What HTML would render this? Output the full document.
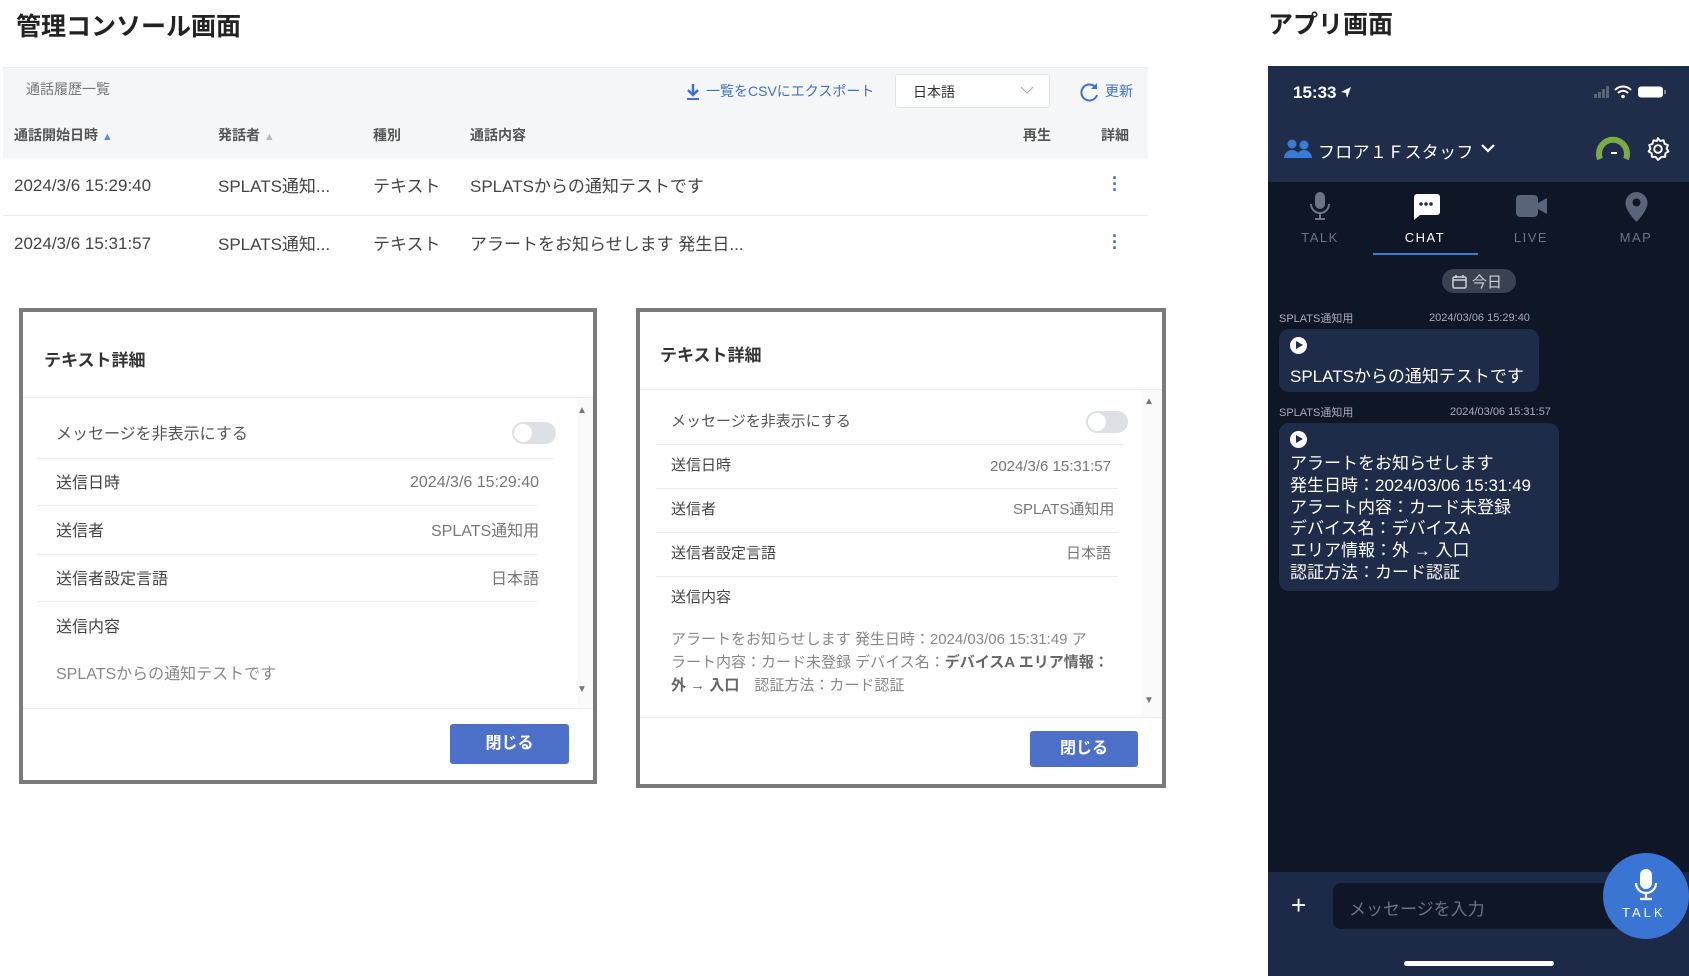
<!DOCTYPE html>
<html><head><meta charset="utf-8">
<style>
*{margin:0;padding:0;box-sizing:border-box}
body{width:1689px;height:976px;background:#fff;position:relative;overflow:hidden;font-family:"Liberation Sans","Noto Sans CJK JP",sans-serif;color:#333}
.a{position:absolute;white-space:nowrap}
.h1{font-size:25px;font-weight:bold;color:#222}
.hd{font-size:14px;color:#555;font-weight:bold}
.cell{font-size:17px;color:#444}
.dlg{position:absolute;border:4px solid #7a7a7c;background:#fff}
.line{position:absolute;height:1px;background:#ececec}
.lbl{font-size:16px;color:#444}
.val{font-size:16px;color:#777}
.tog{position:absolute;width:44px;height:22px;border-radius:11px;background:#dde0e5}
.tog:after{content:"";position:absolute;left:2px;top:2px;width:18px;height:18px;border-radius:50%;background:#fff}
.btn{position:absolute;background:#4d70c8;color:#fff;font-size:16px;font-weight:bold;text-align:center;border-radius:3px}
.ph{color:#fff}
.tab{font-size:13px;letter-spacing:1.5px;color:#6b7385;text-align:center;width:100px}
.bub{position:absolute;background:#1f2c49;border-radius:10px}
.meta{font-size:11px;color:#aab}
.play{position:absolute;width:17px;height:17px;border-radius:50%;background:#fff}
.play:after{content:"";position:absolute;left:6px;top:4px;border-left:7px solid #1f2c49;border-top:4.5px solid transparent;border-bottom:4.5px solid transparent}
</style></head><body>

<div class="a h1" style="left:16px;top:7px">管理コンソール画面</div>
<div class="a h1" style="left:1268px;top:5px">アプリ画面</div>

<div class="a" style="left:3px;top:67px;width:1145px;height:91px;background:#f5f6f8;border-top:1px solid #eceef1"></div>
<div class="a" style="left:26px;top:79px;font-size:14px;color:#777">通話履歴一覧</div>
<svg class="a" style="left:685px;top:83px" width="16" height="18" viewBox="0 0 16 18"><path d="M8 1v10M3 7l5 5 5-5" stroke="#3f6fd0" stroke-width="2.5" fill="none"/><rect x="2" y="15" width="12" height="2" fill="#3f6fd0"/></svg>
<div class="a" style="left:706px;top:81px;font-size:14px;color:#3f6fd0">一覧をCSVにエクスポート</div>
<div class="a" style="left:895px;top:74px;width:155px;height:34px;background:#fff;border:1px solid #e3e5e9;border-radius:3px"></div>
<div class="a" style="left:913px;top:82px;font-size:14px;color:#333">日本語</div>
<svg class="a" style="left:1020px;top:86px" width="14" height="9"><path d="M1 1l6 6 6-6" stroke="#aaa" fill="none"/></svg>
<svg class="a" style="left:1080px;top:82px" width="20" height="20" viewBox="0 0 20 20"><path d="M16 6A8 8 0 1 0 17 13" stroke="#3f6fd0" stroke-width="2" fill="none"/><path d="M17 1v6h-6z" fill="#3f6fd0"/></svg>
<div class="a" style="left:1105px;top:81px;font-size:14px;color:#3f6fd0">更新</div>

<div class="a hd" style="left:14px;top:125px">通話開始日時 <span style="color:#5b8de0;font-size:11px">▲</span></div>
<div class="a hd" style="left:218px;top:125px">発話者 <span style="color:#bbb;font-size:11px">▲</span></div>
<div class="a hd" style="left:373px;top:125px">種別</div>
<div class="a hd" style="left:470px;top:125px">通話内容</div>
<div class="a hd" style="left:1023px;top:125px">再生</div>
<div class="a hd" style="left:1101px;top:125px">詳細</div>

<div class="a cell" style="left:14px;top:176px">2024/3/6 15:29:40</div>
<div class="a cell" style="left:218px;top:172px">SPLATS通知...</div>
<div class="a cell" style="left:373px;top:172px">テキスト</div>
<div class="a cell" style="left:470px;top:172px">SPLATSからの通知テストです</div>
<div class="a" style="left:1112px;top:175px;color:#3f6fd0;font-size:18px;font-weight:bold;line-height:6px">·<br>·<br>·</div>
<div class="line" style="left:3px;top:215px;width:1145px"></div>
<div class="a cell" style="left:14px;top:234px">2024/3/6 15:31:57</div>
<div class="a cell" style="left:218px;top:230px">SPLATS通知...</div>
<div class="a cell" style="left:373px;top:230px">テキスト</div>
<div class="a cell" style="left:470px;top:230px">アラートをお知らせします 発生日...</div>
<div class="a" style="left:1112px;top:233px;color:#3f6fd0;font-size:18px;font-weight:bold;line-height:6px">·<br>·<br>·</div>

<div class="dlg" style="left:19px;top:308px;width:578px;height:476px"></div>
<div class="a" style="left:44px;top:346px;font-size:17px;font-weight:bold;color:#333">テキスト詳細</div>
<div class="line" style="left:23px;top:397px;width:570px"></div>
<div class="a" style="left:577px;top:398px;width:16px;height:309px;background:#fafafa"></div>
<div class="a" style="left:577px;top:405px;font-size:10px;color:#777">▲</div>
<div class="a" style="left:577px;top:684px;font-size:10px;color:#777">▼</div>
<div class="a lbl" style="left:56px;top:420px;color:#555">メッセージを非表示にする</div>
<div class="tog" style="left:512px;top:422px"></div>
<div class="line" style="left:37px;top:458px;width:516px"></div>
<div class="a lbl" style="left:56px;top:469px">送信日時</div>
<div class="a val" style="left:410px;top:474px">2024/3/6 15:29:40</div>
<div class="line" style="left:37px;top:505px;width:500px"></div>
<div class="a lbl" style="left:56px;top:517px">送信者</div>
<div class="a val" style="left:431px;top:517px">SPLATS通知用</div>
<div class="line" style="left:37px;top:554px;width:500px"></div>
<div class="a lbl" style="left:56px;top:565px">送信者設定言語</div>
<div class="a val" style="left:491px;top:565px">日本語</div>
<div class="line" style="left:37px;top:601px;width:500px"></div>
<div class="a lbl" style="left:56px;top:613px">送信内容</div>
<div class="a val" style="left:56px;top:660px;color:#888">SPLATSからの通知テストです</div>
<div class="line" style="left:23px;top:708px;width:570px"></div>
<div class="btn" style="left:450px;top:724px;width:119px;height:40px;line-height:40px">閉じる</div>

<div class="dlg" style="left:636px;top:308px;width:530px;height:480px"></div>
<div class="a" style="left:660px;top:341px;font-size:17px;font-weight:bold;color:#333">テキスト詳細</div>
<div class="line" style="left:640px;top:389px;width:522px"></div>
<div class="a" style="left:1141px;top:390px;width:21px;height:326px;background:#fafafa"></div>
<div class="a" style="left:1144px;top:396px;font-size:10px;color:#777">▲</div>
<div class="a" style="left:1144px;top:695px;font-size:10px;color:#777">▼</div>
<div class="a" style="left:671px;top:410px;font-size:15px;color:#555">メッセージを非表示にする</div>
<div class="tog" style="left:1086px;top:411px;width:42px"></div>
<div class="line" style="left:656px;top:444px;width:468px"></div>
<div class="a" style="left:671px;top:454px;font-size:15px;color:#444">送信日時</div>
<div class="a" style="left:990px;top:458px;font-size:15px;color:#777">2024/3/6 15:31:57</div>
<div class="line" style="left:656px;top:488px;width:462px"></div>
<div class="a" style="left:671px;top:498px;font-size:15px;color:#444">送信者</div>
<div class="a" style="left:1013px;top:498px;font-size:15px;color:#777">SPLATS通知用</div>
<div class="line" style="left:656px;top:532px;width:462px"></div>
<div class="a" style="left:671px;top:542px;font-size:15px;color:#444">送信者設定言語</div>
<div class="a" style="left:1066px;top:542px;font-size:15px;color:#777">日本語</div>
<div class="line" style="left:656px;top:576px;width:462px"></div>
<div class="a" style="left:671px;top:586px;font-size:15px;color:#444">送信内容</div>
<div class="a" style="left:671px;top:628px;font-size:15px;color:#888;line-height:23px">アラートをお知らせします 発生日時：2024/03/06 15:31:49 ア<br>ラート内容：カード未登録 デバイス名：<b style="color:#666">デバイスA エリア情報：</b><br><b style="color:#666">外 → 入口</b>　認証方法：カード認証</div>
<div class="line" style="left:640px;top:717px;width:522px"></div>
<div class="btn" style="left:1030px;top:731px;width:108px;height:36px;line-height:36px">閉じる</div>

<div class="a" style="left:1268px;top:66px;width:421px;height:910px;background:#0f1727"></div>
<div class="a" style="left:1268px;top:66px;width:421px;height:116px;background:#1f2d4a"></div>
<div class="a ph" style="left:1293px;top:83px;font-size:17px;font-weight:bold">15:33</div>
<svg class="a" style="left:1340px;top:86px" width="12" height="13"><path d="M11 1L1 6l5 1 1 5z" fill="#fff"/></svg>
<svg class="a" style="left:1593px;top:85px" width="80" height="14"><g fill="#5a6478"><rect x="1" y="9" width="3" height="4"/><rect x="5" y="7" width="3" height="6"/><rect x="9" y="4" width="3" height="9"/><rect x="13" y="1" width="3" height="12"/></g><path d="M22 5a11 11 0 0 1 16 0M25 8a7 7 0 0 1 10 0" stroke="#fff" stroke-width="2" fill="none"/><circle cx="30" cy="11.5" r="1.8" fill="#fff"/><rect x="45" y="1.5" width="25" height="11" rx="3" fill="#fff"/><rect x="71" y="5" width="2" height="4" fill="#888"/></svg>
<svg class="a" style="left:1284px;top:139px" width="28" height="20"><circle cx="8" cy="5" r="4.5" fill="#3a7bd5"/><path d="M0 19a8 8 0 0 1 16 0z" fill="#3a7bd5"/><circle cx="20" cy="6" r="4.5" fill="#3a7bd5"/><path d="M12 19a8 8 0 0 1 16 0z" fill="#3a7bd5"/></svg>
<div class="a ph" style="left:1318px;top:138px;font-size:17px;letter-spacing:0.3px">フロア１Ｆスタッフ</div>
<svg class="a" style="left:1481px;top:144px" width="14" height="9"><path d="M1 1l6 6 6-6" stroke="#fff" stroke-width="2.2" fill="none"/></svg>
<svg class="a" style="left:1595px;top:135px" width="36" height="28"><path d="M5 24A14 14 0 1 1 31 24" stroke="#7cab45" stroke-width="6" fill="none"/><path d="M16 18h6" stroke="#fff" stroke-width="2"/></svg>
<svg class="a" style="left:1645px;top:136px" width="26" height="26" viewBox="0 0 24 24"><path d="M12 2l2 2.6 3.2-.6.9 3.2 3 1.2-1.1 3.1 1.6 2.8-2.8 1.7-.2 3.3-3.3-.1L12 22l-2.3-2.8-3.3.1-.2-3.3L3.4 14.3 5 11.5 3.9 8.4l3-1.2.9-3.2 3.2.6z" stroke="#fff" stroke-width="1.8" fill="none" stroke-linejoin="round"/><circle cx="12" cy="12" r="3.5" stroke="#fff" stroke-width="1.8" fill="none"/></svg>

<svg class="a" style="left:1309px;top:192px" width="22" height="30"><rect x="6" y="0" width="10" height="17" rx="5" fill="#6b7385"/><path d="M2 12a9 9 0 0 0 18 0M11 21v6M6 27h10" stroke="#6b7385" stroke-width="2" fill="none"/></svg>
<svg class="a" style="left:1411px;top:194px" width="30" height="27"><path d="M4 0h22a3 3 0 0 1 3 3v15a3 3 0 0 1-3 3H9l-6 5V3a3 3 0 0 1 3-3z" fill="#fff"/><circle cx="10" cy="10" r="1.8" fill="#1f2d4a"/><circle cx="15" cy="10" r="1.8" fill="#1f2d4a"/><circle cx="20" cy="10" r="1.8" fill="#1f2d4a"/></svg>
<svg class="a" style="left:1516px;top:195px" width="31" height="22"><rect x="0" y="0" width="22" height="22" rx="4" fill="#5a6478"/><path d="M22 8l9-5v16l-9-5z" fill="#5a6478"/></svg>
<svg class="a" style="left:1625px;top:192px" width="23" height="30"><path d="M11.5 0A11 11 0 0 0 .5 11c0 8 11 19 11 19s11-11 11-19A11 11 0 0 0 11.5 0z" fill="#5a6478"/><circle cx="11.5" cy="10.5" r="4" fill="#0f1727"/></svg>
<div class="a tab" style="left:1270px;top:230px">TALK</div>
<div class="a tab" style="left:1375px;top:230px;color:#fff">CHAT</div>
<div class="a tab" style="left:1481px;top:230px">LIVE</div>
<div class="a tab" style="left:1586px;top:230px">MAP</div>
<div class="a" style="left:1373px;top:253px;width:105px;height:2px;background:#3a7bd5"></div>

<div class="a" style="left:1442px;top:269px;width:74px;height:24px;border-radius:12px;background:#3a4150"></div>
<svg class="a" style="left:1452px;top:274px" width="15" height="15"><rect x="1" y="3" width="13" height="11" rx="1.5" stroke="#cfd3da" stroke-width="1.5" fill="none"/><path d="M1 6h13M4 1v3M11 1v3" stroke="#cfd3da" stroke-width="1.5"/></svg>
<div class="a" style="left:1472px;top:271px;font-size:15px;color:#cfd3da">今日</div>

<div class="a meta" style="left:1279px;top:310px">SPLATS通知用</div>
<div class="a meta" style="left:1429px;top:312px">2024/03/06 15:29:40</div>
<div class="bub" style="left:1279px;top:329px;width:260px;height:63px"></div>
<div class="play" style="left:1290px;top:337px"></div>
<div class="a ph" style="left:1290px;top:362px;font-size:17px">SPLATSからの通知テストです</div>

<div class="a meta" style="left:1279px;top:404px">SPLATS通知用</div>
<div class="a meta" style="left:1450px;top:406px">2024/03/06 15:31:57</div>
<div class="bub" style="left:1279px;top:423px;width:280px;height:168px"></div>
<div class="play" style="left:1290px;top:431px"></div>
<div class="a ph" style="left:1290px;top:453px;font-size:17px;line-height:21.8px">アラートをお知らせします<br>発生日時：2024/03/06 15:31:49<br>アラート内容：カード未登録<br>デバイス名：デバイスA<br>エリア情報：外 → 入口<br>認証方法：カード認証</div>

<div class="a" style="left:1268px;top:872px;width:421px;height:104px;background:#1c2a48"></div>
<div class="a ph" style="left:1291px;top:890px;font-size:26px;font-weight:300">+</div>
<div class="a" style="left:1333px;top:883px;width:290px;height:46px;border-radius:8px;background:#0f1727"></div>
<div class="a" style="left:1349px;top:895px;font-size:17px;color:#6b7385">メッセージを入力</div>
<div class="a" style="left:1603px;top:853px;width:86px;height:86px;border-radius:50%;background:#3a75d4"></div>
<svg class="a" style="left:1633px;top:869px" width="26" height="32"><rect x="7" y="0" width="12" height="20" rx="6" fill="#fff"/><path d="M3 14a10 10 0 0 0 20 0M13 24v5M7 30h12" stroke="#fff" stroke-width="2.2" fill="none"/></svg>
<div class="a" style="left:1622px;top:905px;font-size:13px;color:#fff;letter-spacing:3px">TALK</div>
<div class="a" style="left:1404px;top:961px;width:150px;height:5px;border-radius:3px;background:#fff"></div>
</body></html>
